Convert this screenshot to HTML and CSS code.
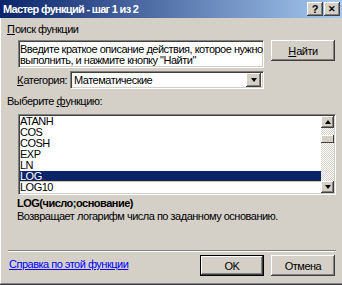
FILE: index.html
```html
<!DOCTYPE html>
<html lang="ru">
<head>
  <meta charset="UTF-8">
  <title>Мастер функций - шаг 1 из 2</title>
  <link rel="stylesheet" href="styles.css">
</head>
<body>
  <div class="dialog">
    <div class="titlebar">
      <span class="title">Мастер функций - шаг 1 из 2</span>
      <div class="caption-buttons">
        <span class="cap-btn">?</span>
        <span class="cap-btn cap-close">&#x2715;</span>
      </div>
    </div>
    <div class="content">
      <div class="label"><u>П</u>оиск функции</div>
      <div class="search-row">
        <div class="field search-text">Введите краткое описание действия, которое нужно<br>выполнить, и нажмите кнопку "Найти"</div>
        <button class="btn"><u>Н</u>айти</button>
      </div>
      <div class="category-row">
        <span class="category-label"><u>К</u>атегория:</span>
        <div class="field select">
          <span class="select-value">Математические</span>
          <span class="drop-btn"><span class="arrow-down"></span></span>
        </div>
      </div>
      <div class="label">Выберите <u>ф</u>ункцию:</div>
      <div class="field listbox">
        <ul class="items">
          <li>ATANH</li>
          <li>COS</li>
          <li>COSH</li>
          <li>EXP</li>
          <li>LN</li>
          <li class="selected">LOG</li>
          <li>LOG10</li>
        </ul>
        <div class="scrollbar">
          <span class="sb-btn"><span class="arrow-up"></span></span>
          <div class="sb-track"><span class="sb-thumb"></span></div>
          <span class="sb-btn"><span class="arrow-down"></span></span>
        </div>
      </div>
      <div class="signature">LOG(число;основание)</div>
      <div class="desc">Возвращает логарифм числа по заданному основанию.</div>
      <div class="separator"></div>
      <div class="footer">
        <a class="help-link" href="#">Справка по этой функции</a>
        <button class="btn btn-default">OK</button>
        <button class="btn">Отмена</button>
      </div>
    </div>
  </div>
</body>
</html>
```

FILE: styles.css
```css
body {
  margin: 0;
  font-family: "Liberation Sans", Arial, sans-serif;
  font-size: 11px;
  letter-spacing: -0.5px;
  color: #000;
}

u {
  letter-spacing: 0;
}

.dialog {
  width: 342px;
  height: 285px;
  box-sizing: border-box;
  background-color: #d4d0c8;
  border-bottom: 1px solid #404040;
  display: flex;
  flex-direction: column;
}

.titlebar {
  height: 18px;
  flex: none;
  display: flex;
  align-items: center;
  justify-content: space-between;
  padding: 0 2px 0 3px;
  background: linear-gradient(to right, #0a246a, #a6caf0);
}

.title {
  color: #fff;
  font-weight: bold;
  letter-spacing: -0.7px;
}

.caption-buttons {
  display: flex;
  gap: 1px;
}

.cap-btn {
  width: 16px;
  height: 14px;
  box-sizing: border-box;
  display: flex;
  align-items: center;
  justify-content: center;
  background-color: #d4d0c8;
  font-weight: bold;
  font-size: 11px;
  letter-spacing: 0;
  box-shadow: inset -1px -1px #404040, inset 1px 1px #fff, inset -2px -2px #808080;
}

.cap-close {
  font-size: 9px;
}

.content {
  flex: 1;
  padding: 5px 6px 0 6px;
  border-left: 1px solid #fff;
  border-bottom: 1px solid #808080;
  display: flex;
  flex-direction: column;
}

.label {
  line-height: 13px;
}

.field {
  background-color: #fff;
  box-sizing: border-box;
  border-top: 1px solid #808080;
  border-left: 1px solid #808080;
  border-bottom: 1px solid #fff;
  border-right: 1px solid #fff;
  box-shadow: inset 1px 1px #404040, inset -1px -1px #d4d0c8;
}

.search-row {
  display: flex;
  align-items: flex-start;
  margin-top: 4px;
}

.search-text {
  width: 246px;
  height: 28px;
  margin-left: 11px;
  padding: 3px 0 0 1px;
  line-height: 11px;
  overflow: hidden;
  white-space: nowrap;
}

.btn {
  width: 64px;
  height: 21px;
  margin: 0 0 0 7px;
  padding: 0;
  border: none;
  background-color: #d4d0c8;
  font: inherit;
  letter-spacing: inherit;
  color: #000;
  box-shadow: inset -1px -1px #404040, inset 1px 1px #fff, inset -2px -2px #808080;
}

.btn-default {
  border: 1px solid #000;
}

.category-row {
  display: flex;
  align-items: center;
  margin-top: 3px;
}

.category-label {
  width: 53px;
  margin-left: 10px;
}

.select {
  width: 194px;
  height: 18px;
  display: flex;
  align-items: center;
  justify-content: space-between;
  padding: 0 2px 0 3px;
}

.drop-btn {
  width: 15px;
  height: 14px;
  box-sizing: border-box;
  display: flex;
  align-items: center;
  justify-content: center;
  background-color: #d4d0c8;
  box-shadow: inset -1px -1px #404040, inset 1px 1px #fff, inset -2px -2px #808080;
}

.arrow-down {
  width: 0;
  height: 0;
  border-left: 3px solid transparent;
  border-right: 3px solid transparent;
  border-top: 4px solid #000;
}

.arrow-up {
  width: 0;
  height: 0;
  border-left: 3px solid transparent;
  border-right: 3px solid transparent;
  border-bottom: 4px solid #000;
}

.category-row + .label {
  margin-top: 6px;
}

.listbox {
  width: 318px;
  height: 81px;
  margin: 6px 0 0 11px;
  padding: 1px;
  display: flex;
}

.items {
  flex: 1;
  list-style: none;
  margin: 0;
  padding: 0;
  overflow: hidden;
}

.items li {
  height: 11px;
  line-height: 11px;
  padding-left: 0;
}

.items .selected {
  background-color: #0a246a;
  color: #fff;
  box-shadow: inset 0 -1px #d8c890;
}

.scrollbar {
  width: 13px;
  display: flex;
  flex-direction: column;
}

.sb-btn {
  height: 12px;
  flex: none;
  box-sizing: border-box;
  display: flex;
  align-items: center;
  justify-content: center;
  background-color: #d4d0c8;
  box-shadow: inset -1px -1px #404040, inset 1px 1px #fff, inset -2px -2px #808080;
}

.sb-track {
  flex: 1;
  background-color: #fff;
  background-image: conic-gradient(#d4d0c8 25%, #fff 0 50%, #d4d0c8 0 75%, #fff 0);
  background-size: 2px 2px;
}

.sb-thumb {
  display: block;
  height: 8px;
  margin-top: 7px;
  background-color: #d4d0c8;
  box-shadow: inset -1px -1px #404040, inset 1px 1px #fff;
}

.signature {
  margin: 2px 0 0 10px;
  line-height: 13px;
  font-weight: bold;
}

.desc {
  margin-left: 10px;
  line-height: 13px;
}

.separator {
  margin: 27px 0 0 1px;
  border-top: 1px solid #808080;
  border-bottom: 1px solid #fff;
}

.footer {
  display: flex;
  align-items: flex-start;
  margin-top: 3px;
}

.help-link {
  margin: 3px auto 0 2px;
  line-height: 13px;
  color: #0000ff;
}

.footer .btn:last-child {
  margin-right: 1px;
}
```
